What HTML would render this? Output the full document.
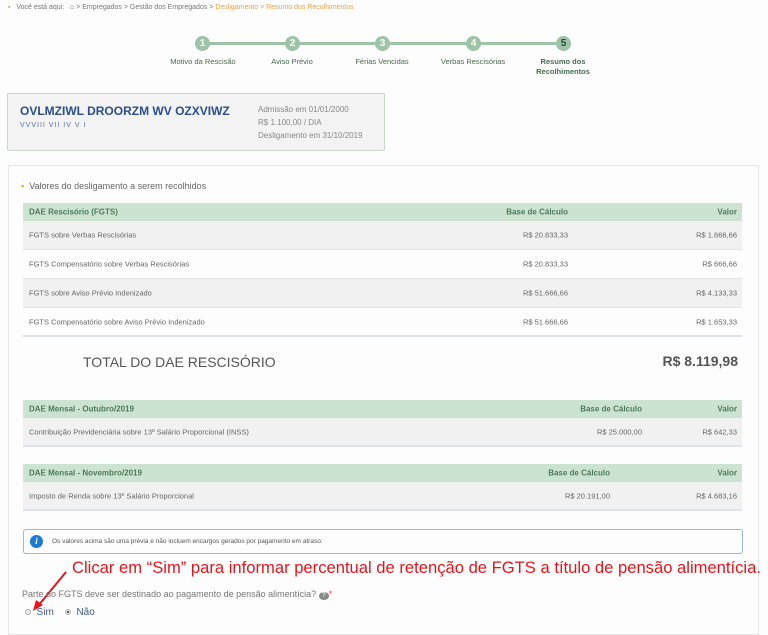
<!DOCTYPE html>
<html><head><meta charset="utf-8"><style>
*{margin:0;padding:0;box-sizing:border-box}
body{width:768px;height:628px;background:#fdfdfd;font-family:"Liberation Sans",sans-serif;position:relative;overflow:hidden;color:#555}
.a{position:absolute;white-space:nowrap}
.bc{top:4px;left:8px;font-size:7px;color:#777}
.line{position:absolute;top:42px;height:3px;background:#9dc4a6}
.c{position:absolute;top:36px;width:15px;height:15px;border-radius:50%;background:#9dc4a6;color:#fff;font-size:10px;font-weight:bold;text-align:center;line-height:15px}
.sl{position:absolute;top:57px;font-size:7.5px;color:#4a6a4f;text-align:center;width:90px}
.card{left:7px;top:93px;width:378px;height:58px;background:#f3f3f3;border:1px solid #c9d6c9;border-radius:2px}
.box{left:8px;top:165px;width:751px;height:470px;border:1px solid #e6e6e6;background:#fcfdfc}
.tbl{position:absolute;left:23px;width:719px}
.h{height:18px;background:#cde3d2;color:#4e7a59;font-size:8px;font-weight:bold;position:relative}
.r{height:29px;font-size:7.5px;color:#666;position:relative;border-bottom:1px solid #e4e4e4}
.g{background:#f1f1f1}
.h span,.r span{position:absolute;top:50%;transform:translateY(-50%)}
</style></head><body>
<div class="a bc"><span style="color:#8bc34a">▪</span>&nbsp;&nbsp; Você está aqui: &nbsp;&nbsp;<span style="color:#555">⌂</span> &gt; Empregados &gt; Gestão dos Empregados &gt; <span style="color:#f0a040">Desligamento &gt; Resumo dos Recolhimentos</span></div>
<div class="line" style="left:203px;width:360px"></div>
<div class="c" style="left:195px">1</div><div class="c" style="left:285px">2</div><div class="c" style="left:375px">3</div><div class="c" style="left:466px">4</div><div class="c" style="left:556px;color:#2d4a33">5</div>
<div class="sl" style="left:158px">Motivo da Rescisão</div>
<div class="sl" style="left:247px">Aviso Prévio</div>
<div class="sl" style="left:337px">Férias Vencidas</div>
<div class="sl" style="left:428px">Verbas Rescisórias</div>
<div class="sl" style="left:518px;font-weight:bold;line-height:10px">Resumo dos<br>Recolhimentos</div>
<div class="a card">
<div class="a" style="left:12px;top:10px;font-size:12px;font-weight:bold;color:#2a4f8a">OVLMZIWL DROORZM WV OZXVIWZ</div>
<div class="a" style="left:12px;top:28px;font-size:7px;color:#5a6fa0;letter-spacing:1px">VVVIII VII IV V I</div>
<div class="a" style="left:250px;top:9px;font-size:8px;color:#888;line-height:13px">Admissão em 01/01/2000<br>R$ 1.100,00 / DIA<br>Desligamento em 31/10/2019</div>
</div>
<div class="a box"></div>
<div class="a" style="left:21px;top:181px;font-size:9px;color:#666"><span style="color:#f39c12">▪</span>&nbsp; Valores do desligamento a serem recolhidos</div>
<div class="tbl" style="top:203px">
<div class="h"><span style="left:6px">DAE Rescisório (FGTS)</span><span style="right:174px">Base de Cálculo</span><span style="right:5px">Valor</span></div>
<div class="r g"><span style="left:6px">FGTS sobre Verbas Rescisórias</span><span style="right:174px">R$ 20.833,33</span><span style="right:5px">R$ 1.666,66</span></div>
<div class="r"><span style="left:6px">FGTS Compensatório sobre Verbas Rescisórias</span><span style="right:174px">R$ 20.833,33</span><span style="right:5px">R$ 666,66</span></div>
<div class="r g"><span style="left:6px">FGTS sobre Aviso Prévio Indenizado</span><span style="right:174px">R$ 51.666,66</span><span style="right:5px">R$ 4.133,33</span></div>
<div class="r" style="border-bottom:2px solid #dde3ea"><span style="left:6px">FGTS Compensatório sobre Aviso Prévio Indenizado</span><span style="right:174px">R$ 51.666,66</span><span style="right:5px">R$ 1.653,33</span></div>
</div>
<div class="a" style="left:83px;top:354px;font-size:14px;color:#555">TOTAL DO DAE RESCISÓRIO</div>
<div class="a" style="right:30px;top:353px;font-size:14px;font-weight:bold;color:#555">R$ 8.119,98</div>
<div class="tbl" style="top:400px">
<div class="h"><span style="left:6px">DAE Mensal - Outubro/2019</span><span style="right:100px">Base de Cálculo</span><span style="right:5px">Valor</span></div>
<div class="r g" style="border-bottom:2px solid #dde3ea"><span style="left:6px">Contribuição Previdenciária sobre 13º Salário Proporcional (INSS)</span><span style="right:100px">R$ 25.000,00</span><span style="right:5px">R$ 642,33</span></div>
</div>
<div class="tbl" style="top:464px">
<div class="h"><span style="left:6px">DAE Mensal - Novembro/2019</span><span style="right:132px">Base de Cálculo</span><span style="right:5px">Valor</span></div>
<div class="r g" style="border-bottom:2px solid #dde3ea"><span style="left:6px">Imposto de Renda sobre 13º Salário Proporcional</span><span style="right:132px">R$ 20.191,00</span><span style="right:5px">R$ 4.683,16</span></div>
</div>
<div class="a" style="left:23px;top:529px;width:720px;height:25px;border:1px solid #9ab8d8;border-radius:3px;background:#fdfdfd">
<div class="a" style="left:6px;top:5px;width:13px;height:13px;border-radius:50%;background:#1e7ad0;color:#fff;font-size:9px;font-style:italic;font-weight:bold;text-align:center;line-height:13px;font-family:'Liberation Serif',serif">i</div>
<div class="a" style="left:28px;top:8px;font-size:6.5px;color:#555">Os valores acima são uma prévia e não incluem encargos gerados por pagamento em atraso.</div>
</div>
<div class="a" style="left:72px;top:558px;font-size:16.6px;color:#e8141b">Clicar em “Sim” para informar percentual de retenção de FGTS a título de pensão alimentícia.</div>
<svg class="a" style="left:30px;top:570px" width="40" height="42"><line x1="36" y1="2" x2="8" y2="36" stroke="#e8141b" stroke-width="2"/><polygon points="3,41 6,30 13,35" fill="#e8141b"/></svg>
<div class="a" style="left:22px;top:589px;font-size:9px;color:#777">Parte do FGTS deve ser destinado ao pagamento de pensão alimentícia? <span style="display:inline-block;width:10px;height:8px;border-radius:50%;background:#888;color:#fff;font-size:7px;text-align:center;line-height:8px">?</span><span style="color:#e44">*</span></div>
<div class="a" style="left:25px;top:607px;font-size:10px;color:#3a5a8a"><span style="display:inline-block;width:6px;height:6px;border-radius:50%;border:1px solid #aaa;background:#eee"></span>&nbsp; Sim &nbsp;&nbsp; <span style="display:inline-block;width:6px;height:6px;border-radius:50%;border:1px solid #aaa;background:radial-gradient(#555 40%,#eee 45%)"></span>&nbsp; Não</div>
</body></html>
